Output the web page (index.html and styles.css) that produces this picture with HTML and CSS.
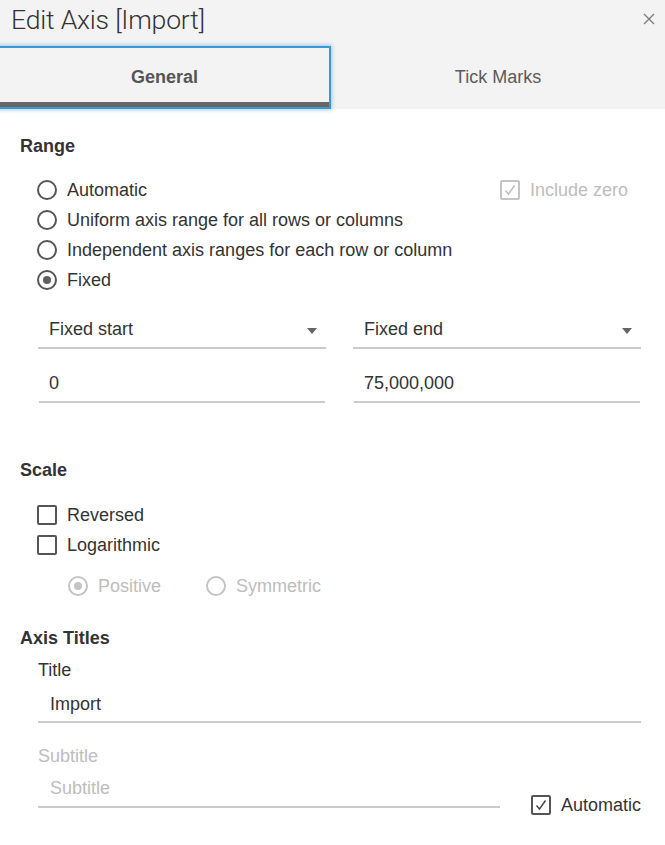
FILE: index.html
```html
<!DOCTYPE html>
<html lang="en">
<head>
<meta charset="utf-8">
<title>Edit Axis [Import]</title>
<link rel="stylesheet" href="styles.css">
</head>
<body>
<div class="dialog">
  <header class="titlebar">
    <h1 class="title">Edit Axis [Import]</h1>
    <span class="close" aria-label="Close">
      <svg width="12" height="12" viewBox="0 0 12 12"><path d="M1 1 L11 11 M11 1 L1 11" stroke="#7a7a7a" stroke-width="1.3" fill="none"/></svg>
    </span>
  </header>
  <nav class="tabs">
    <div class="tab tab-active">General</div>
    <div class="tab">Tick Marks</div>
  </nav>
  <main class="content">
    <h2 class="heading heading-range">Range</h2>
    <div class="options">
      <div class="row">
        <span class="radio"></span><span class="label">Automatic</span>
        <span class="include-zero disabled"><span class="checkbox checked"><svg width="14" height="12" viewBox="0 0 14 12"><path d="M2.5 6.5 L5.5 10 L11.5 1.5" stroke="currentColor" stroke-width="1.4" fill="none"/></svg></span><span class="label">Include zero</span></span>
      </div>
      <div class="row"><span class="radio"></span><span class="label">Uniform axis range for all rows or columns</span></div>
      <div class="row"><span class="radio"></span><span class="label">Independent axis ranges for each row or column</span></div>
      <div class="row"><span class="radio selected"></span><span class="label">Fixed</span></div>
    </div>
    <div class="pair pair-select">
      <div class="field select"><span class="value">Fixed start</span><span class="caret"></span></div>
      <div class="field select"><span class="value">Fixed end</span><span class="caret"></span></div>
    </div>
    <div class="pair pair-input">
      <div class="field input"><span class="value">0</span></div>
      <div class="field input"><span class="value">75,000,000</span></div>
    </div>

    <h2 class="heading heading-scale">Scale</h2>
    <div class="options options-scale">
      <div class="row"><span class="checkbox"></span><span class="label">Reversed</span></div>
      <div class="row"><span class="checkbox"></span><span class="label">Logarithmic</span></div>
    </div>
    <div class="row sub-options disabled">
      <span class="radio selected"></span><span class="label">Positive</span>
      <span class="radio radio-sym"></span><span class="label">Symmetric</span>
    </div>

    <h2 class="heading heading-titles">Axis Titles</h2>
    <div class="titles">
      <div class="field-label">Title</div>
      <div class="field input title-input"><span class="value">Import</span></div>
      <div class="field-label disabled subtitle-label">Subtitle</div>
      <div class="subtitle-row">
        <div class="field input subtitle-input"><span class="value placeholder">Subtitle</span></div>
        <span class="auto-check"><span class="checkbox checked"><svg width="14" height="12" viewBox="0 0 14 12"><path d="M2.5 6.5 L5.5 10 L11.5 1.5" stroke="currentColor" stroke-width="1.4" fill="none"/></svg></span><span class="label">Automatic</span></span>
      </div>
    </div>
  </main>
</div>
</body>
</html>
```

FILE: styles.css
```css
* { box-sizing: border-box; margin: 0; padding: 0; }

html, body {
  width: 665px;
  height: 845px;
  background: #ffffff;
  overflow: hidden;
}

body {
  font-family: "Liberation Sans", Arial, sans-serif;
  font-size: 18px;
  color: #333333;
}

.dialog {
  display: flex;
  flex-direction: column;
}

.titlebar {
  height: 46px;
  background: #f3f3f3;
  display: flex;
  align-items: center;
  justify-content: space-between;
  padding: 0 10px 8px 11px;
}

.title {
  font-family: Roboto, "Liberation Sans", sans-serif;
  font-weight: 300;
  font-size: 26.6px;
  color: #333333;
  letter-spacing: -0.2px;
}

.close {
  display: flex;
  width: 12px;
  height: 12px;
}

.tabs {
  height: 63px;
  background: #f3f3f3;
  display: flex;
}

.tab {
  flex: 1;
  display: flex;
  align-items: center;
  justify-content: center;
  color: #5b5b5b;
  font-size: 18px;
  padding-bottom: 1px;
}

.tab-active {
  flex: 0 0 333px;
  margin-left: -2px;
  font-weight: bold;
  color: #555555;
  border: 2px solid #3a98d8;
  box-shadow: inset 0 -5px 0 #666666, 0 0 4px 1px rgba(58, 152, 216, 0.45);
  padding-bottom: 0;
  position: relative;
  z-index: 1;
}

.content {
  padding: 26px 24px 0 20px;
}

.heading {
  font-size: 18px;
  font-weight: bold;
  color: #333333;
  line-height: 22px;
}

.options {
  margin-top: 18px;
  padding-left: 17px;
}

.row {
  display: flex;
  align-items: center;
  height: 30px;
}

.label {
  margin-left: 10px;
  line-height: 22px;
}

.radio {
  width: 20px;
  height: 20px;
  border: 2px solid #555555;
  border-radius: 50%;
  flex: 0 0 auto;
  display: flex;
  align-items: center;
  justify-content: center;
}

.radio.selected::after {
  content: "";
  width: 8px;
  height: 8px;
  border-radius: 50%;
  background: #606060;
}

.checkbox {
  width: 20px;
  height: 20px;
  border: 2px solid #555555;
  border-radius: 2px;
  flex: 0 0 auto;
  display: flex;
  align-items: center;
  justify-content: center;
  color: #444444;
}

.disabled,
.disabled .label {
  color: #bdbdbd;
}

.disabled .radio,
.disabled .checkbox {
  border-color: #c4c4c4;
  color: #bdbdbd;
}

.disabled .radio.selected::after {
  background: #c4c4c4;
}

.include-zero {
  margin-left: auto;
  margin-right: 13px;
  display: flex;
  align-items: center;
}

.pair {
  display: flex;
  gap: 27px;
  padding-left: 18px;
}

.pair-select {
  margin-top: 16px;
}

.pair-input {
  margin-top: 17px;
  padding-left: 19px;
  padding-right: 1px;
  gap: 29px;
}

.field {
  flex: 1;
  display: flex;
  align-items: center;
  border-bottom: 2px solid #cbcbcb;
  padding-left: 11px;
}

.select {
  height: 38px;
  justify-content: space-between;
  padding-right: 9px;
}

.input {
  height: 37px;
  padding-left: 10px;
}

.caret {
  width: 0;
  height: 0;
  border-left: 5px solid transparent;
  border-right: 5px solid transparent;
  border-top: 6px solid #666666;
  margin-top: 4px;
}

.heading-scale {
  margin-top: 56px;
}

.options-scale {
  margin-top: 19px;
}

.sub-options {
  margin-top: 11px;
  padding-left: 48px;
}

.radio-sym {
  margin-left: 45px;
}

.heading-titles {
  margin-top: 26px;
}

.titles {
  padding-left: 18px;
  display: flex;
  flex-direction: column;
}

.field-label {
  margin-top: 10px;
  line-height: 22px;
}

.title-input {
  flex: none;
  margin-top: 6px;
  height: 36px;
  padding-left: 12px;
}

.subtitle-label {
  margin-top: 22px;
}

.subtitle-row {
  margin-top: 4px;
  display: flex;
  align-items: flex-end;
}

.subtitle-input {
  flex: 0 0 462px;
  height: 37px;
  padding-left: 12px;
}

.placeholder {
  color: #bdbdbd;
}

.auto-check {
  margin-left: 31px;
  margin-bottom: -12px;
  display: flex;
  align-items: center;
  height: 30px;
}
```
